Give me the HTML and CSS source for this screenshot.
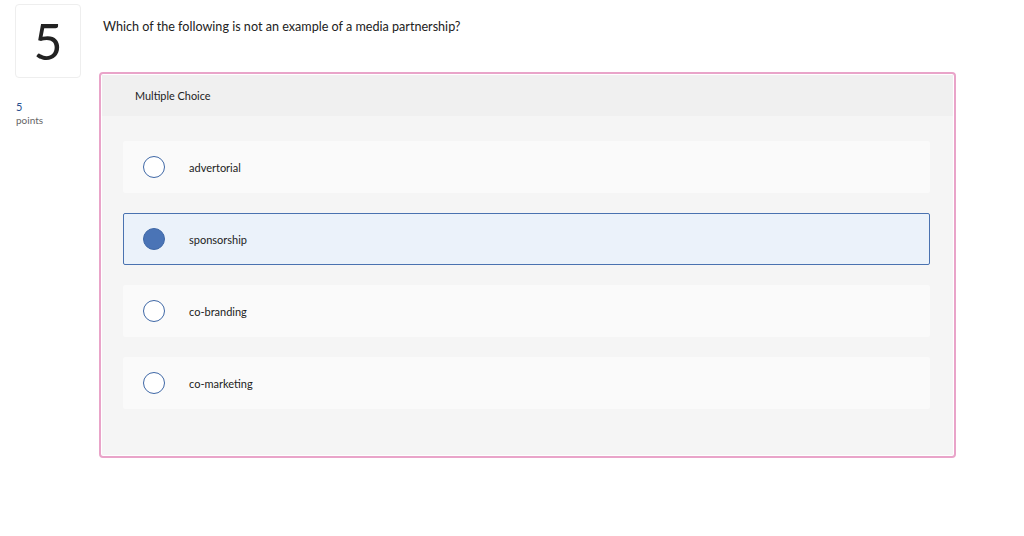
FILE: index.html
```html
<!DOCTYPE html>
<html>
<head>
<meta charset="utf-8">
<link rel="stylesheet" href="styles.css">
</head>
<body>
<div class="page">
  <div class="side">
    <div class="qnum">5</div>
    <div class="pts">
      <div class="pts-val">5</div>
      <div class="pts-lbl">points</div>
    </div>
  </div>
  <div class="main">
    <div class="prompt">Which of the following is not an example of a media partnership?</div>
    <div class="card">
      <div class="card-head">Multiple Choice</div>
      <div class="options">
        <div class="opt"><span class="radio"></span><span class="opt-text">advertorial</span></div>
        <div class="opt selected"><span class="radio"></span><span class="opt-text">sponsorship</span></div>
        <div class="opt"><span class="radio"></span><span class="opt-text">co-branding</span></div>
        <div class="opt"><span class="radio"></span><span class="opt-text">co-marketing</span></div>
      </div>
    </div>
  </div>
</div>
</body>
</html>
```
FILE: styles.css
```css
html, body {
  margin: 0;
  padding: 0;
  background: #fff;
}
body {
  font-family: Lato, "Noto Sans", sans-serif;
  color: #222;
}
.page {
  display: flex;
  padding: 4px 0 0 15px;
  gap: 18px;
}
.side {
  width: 66px;
  flex: none;
}
.qnum {
  box-sizing: border-box;
  width: 66px;
  height: 74px;
  border: 1px solid #eeeeee;
  border-radius: 4px;
  display: flex;
  align-items: center;
  justify-content: center;
  font-size: 50px;
  font-weight: 400;
  color: #222;
  line-height: 1;
}
.pts {
  margin-top: 22px;
  padding-left: 1px;
}
.pts-val {
  font-size: 11px;
  color: #2a4f8f;
  line-height: 14px;
}
.pts-lbl {
  font-size: 10px;
  color: #666;
  line-height: 13px;
}
.main {
  width: 857px;
  flex: none;
}
.prompt {
  font-size: 12.6px;
  line-height: 16px;
  margin: 15px 0 0 4px;
  color: #222;
}
.card {
  box-sizing: border-box;
  margin-top: 37px;
  height: 386px;
  border: 2px solid #e9a4c9;
  border-radius: 4px;
  box-shadow: inset 0 0 0 1px #fff;
  background: #f5f5f5;
  padding: 1px;
  overflow: hidden;
}
.card-head {
  height: 41px;
  background: #f0f0f0;
  display: flex;
  align-items: center;
  padding-left: 33px;
  font-size: 10.9px;
  color: #222;
}
.options {
  display: flex;
  flex-direction: column;
  gap: 20px;
  padding: 25px 23px 0 21px;
}
.opt {
  box-sizing: border-box;
  height: 52px;
  background: #fafafa;
  border-radius: 2px;
  display: flex;
  align-items: center;
  padding-left: 20px;
  gap: 24px;
  font-size: 11px;
  color: #222;
}
.opt.selected {
  background: #ebf2fa;
  border: 1px solid #4a72b0;
  padding-left: 19px;
}
.radio {
  box-sizing: border-box;
  width: 22px;
  height: 22px;
  border-radius: 50%;
  border: 1px solid #3f68a6;
  background: #fff;
  flex: none;
}
.selected .radio {
  background: #4a74b6;
  border-color: #3f68a6;
}
```
